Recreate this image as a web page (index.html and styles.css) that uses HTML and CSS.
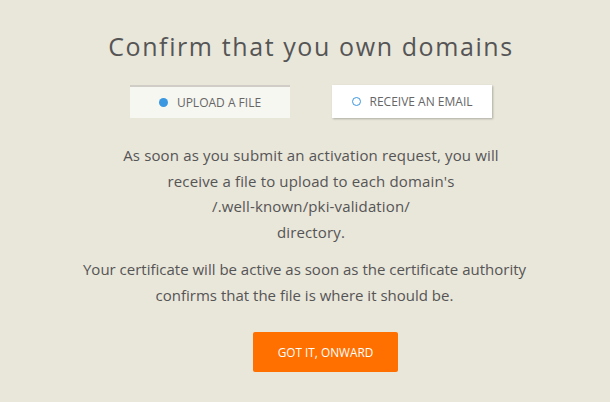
FILE: index.html
```html
<!DOCTYPE html>
<html lang="en">
<head>
    <meta charset="UTF-8">
    <meta name="viewport" content="width=device-width, initial-scale=1.0">
    <title>Confirm domains</title>
    <link rel="stylesheet" href="styles.css">
</head>
<body>
    <div class="container">
        <h1>Confirm that you own domains</h1>

        <div class="methods">
            <button class="method active" type="button">
                <span class="radio"></span>Upload a file
            </button>
            <button class="method" type="button">
                <span class="radio"></span>Receive an email
            </button>
        </div>

        <p class="info">
            As soon as you submit an activation request, you will
            receive a file to upload to each domain's
            <span class="path">/.well-known/pki-validation/</span>
            directory.
        </p>

        <p class="note">
            Your certificate will be active as soon as the certificate authority
            confirms that the file is where it should be.
        </p>

        <button class="onward" type="button">Got it, onward</button>
    </div>
</body>
</html>
```

FILE: styles.css
```css
body {
    margin: 0;
    padding: 0;
    font-family: "Open Sans", Arial, sans-serif;
    background-color: #e9e6da;
    color: #555;
}

.container {
    max-width: 470px;
    margin: 0 auto;
    padding: 29px 0 0 12px;
    text-align: center;
}

h1 {
    margin: 0;
    font-size: 25px;
    font-weight: 400;
    letter-spacing: 1.6px;
    line-height: 34px;
    color: #555;
}

.methods {
    display: flex;
    justify-content: center;
    gap: 42px;
    margin-top: 22px;
}

.method {
    width: 160px;
    height: 33px;
    border: none;
    background-color: #fff;
    box-shadow: 1px 1px 2px rgba(0, 0, 0, 0.25);
    font-family: inherit;
    font-size: 12px;
    text-transform: uppercase;
    color: #666;
    display: flex;
    align-items: center;
    justify-content: center;
    cursor: pointer;
}

.method.active {
    background-color: #f7f7f2;
    border-top: 2px solid #cfcdc5;
    box-shadow: none;
}

.radio {
    width: 7px;
    height: 7px;
    border: 1px solid #3a97e0;
    border-radius: 50%;
    margin-right: 9px;
}

.method.active .radio {
    width: 9px;
    height: 9px;
    border: none;
    background-color: #3a97e0;
}

.info {
    max-width: 400px;
    margin: 25px auto 0;
    font-size: 15px;
    letter-spacing: 0.15px;
    line-height: 25.5px;
}

.path {
    display: block;
}

.note {
    margin: 12px 0 0 -13px;
    font-size: 15px;
    line-height: 25.5px;
}

.onward {
    margin: 24px 0 0 29px;
    width: 145px;
    height: 40px;
    border: none;
    border-radius: 2px;
    background-color: #ff7000;
    color: #fff;
    font-family: inherit;
    font-size: 11.8px;
    text-transform: uppercase;
    cursor: pointer;
}
```
